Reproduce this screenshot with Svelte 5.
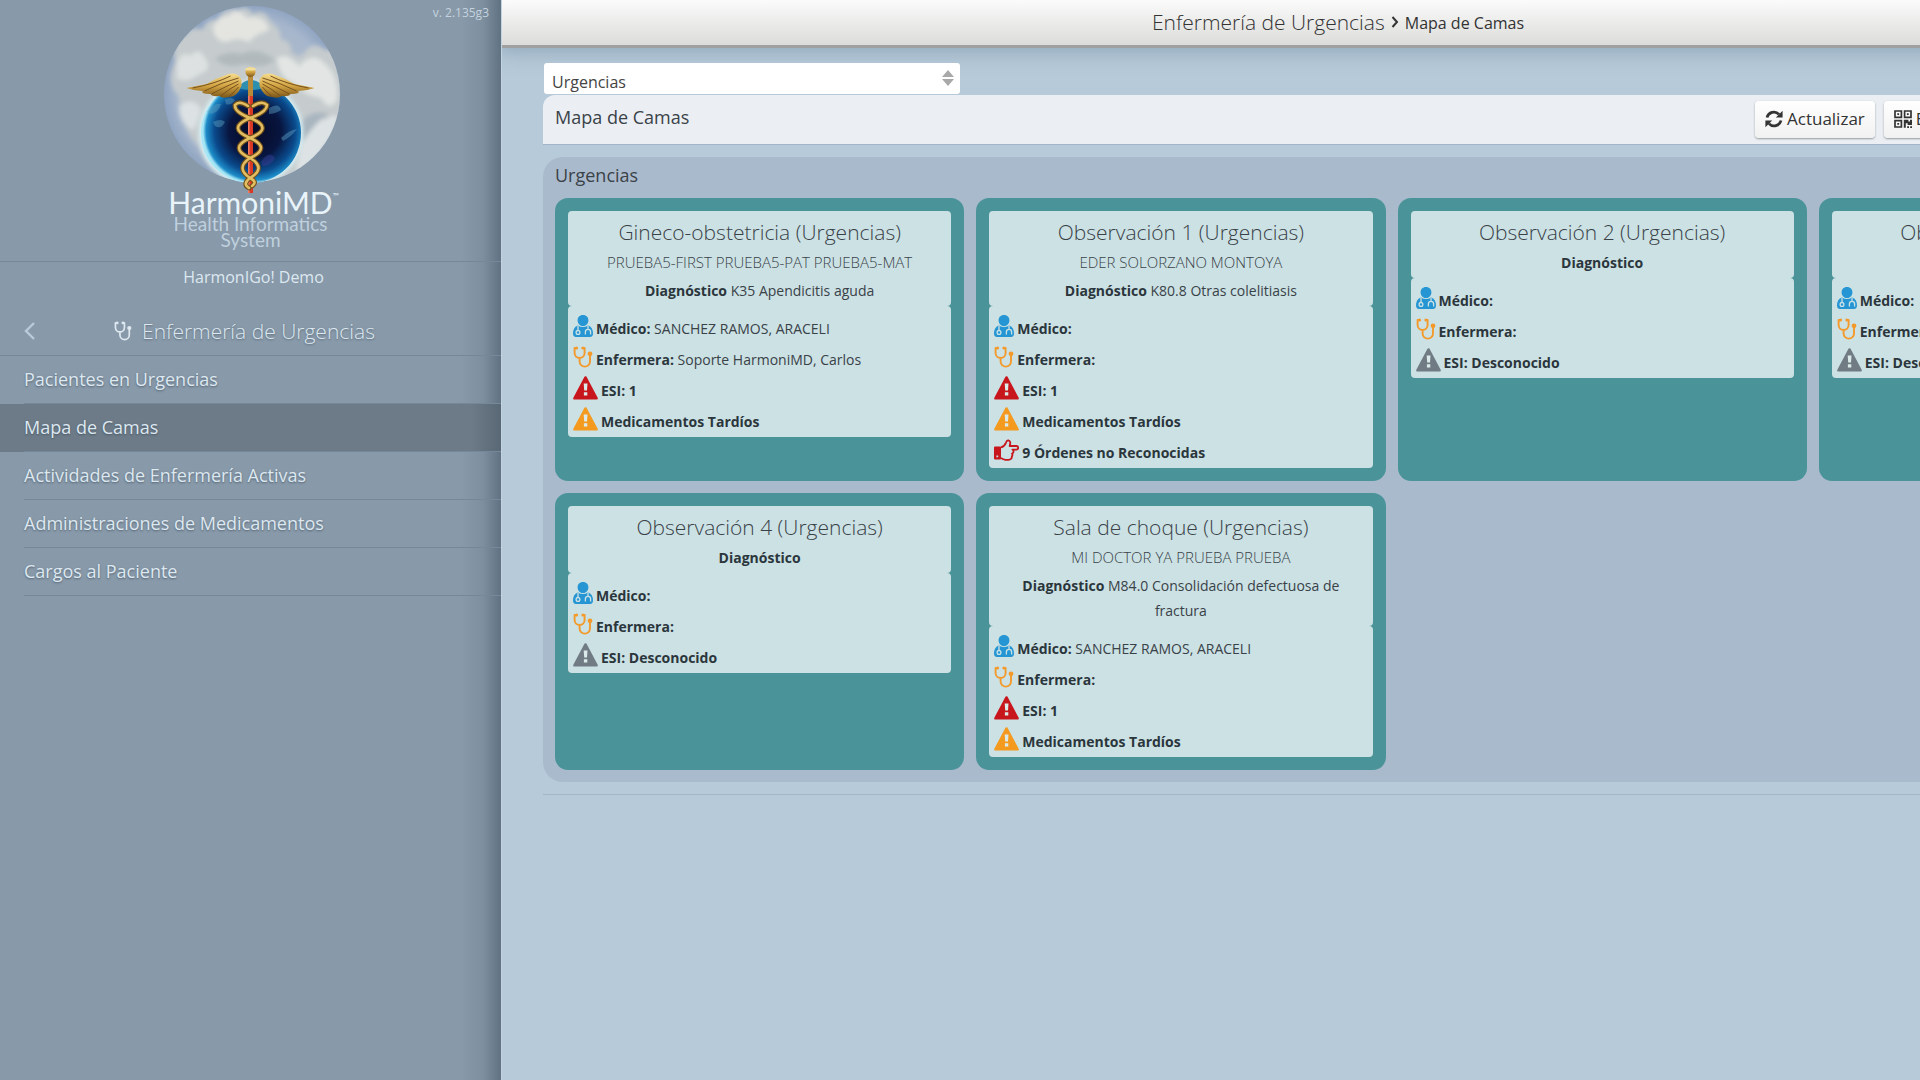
<script lang="ts">
  type Bed = {
    name: string;
    patient?: string;
    diagnosis?: string;
    doctor?: string;
    nurse?: string;
    esi?: number;
    lateMeds?: boolean;
    orders?: number;
  };

  const navItems = [
    'Pacientes en Urgencias',
    'Mapa de Camas',
    'Actividades de Enfermería Activas',
    'Administraciones de Medicamentos',
    'Cargos al Paciente'
  ];

  const beds: Bed[] = [
    {
      name: 'Gineco-obstetricia (Urgencias)',
      patient: 'PRUEBA5-FIRST PRUEBA5-PAT PRUEBA5-MAT',
      diagnosis: 'K35 Apendicitis aguda',
      doctor: 'SANCHEZ RAMOS, ARACELI',
      nurse: 'Soporte HarmoniMD, Carlos',
      esi: 1,
      lateMeds: true
    },
    {
      name: 'Observación 1 (Urgencias)',
      patient: 'EDER SOLORZANO MONTOYA',
      diagnosis: 'K80.8 Otras colelitiasis',
      esi: 1,
      lateMeds: true,
      orders: 9
    },
    { name: 'Observación 2 (Urgencias)' },
    { name: 'Observación 3 (Urgencias)' },
    { name: 'Observación 4 (Urgencias)' },
    {
      name: 'Sala de choque (Urgencias)',
      patient: 'MI DOCTOR YA PRUEBA PRUEBA',
      diagnosis: 'M84.0 Consolidación defectuosa de fractura',
      doctor: 'SANCHEZ RAMOS, ARACELI',
      esi: 1,
      lateMeds: true
    }
  ];

  let active = $state('Mapa de Camas');
  let area = $state('Urgencias');
</script>

{#snippet stethoscope()}
  <svg class="steth" viewBox="0 0 20 22" aria-hidden="true">
    <path
      d="M3 2 H1.6 V7 a5 5 0 0 0 10 0 V2 H10.2 M6.6 12 v3.4 a5.2 5.2 0 0 0 10.4 0 V9.6"
      fill="none"
      stroke="currentColor"
      stroke-width="1.9"
      stroke-linejoin="round"
    />
    <circle cx="3.6" cy="2" r="1.5" fill="currentColor" />
    <circle cx="9.8" cy="2" r="1.5" fill="currentColor" />
    <circle cx="17" cy="7.8" r="2.4" fill="currentColor" />
  </svg>
{/snippet}

{#snippet warning(level: string)}
  <svg class="warn {level}" viewBox="0 0 25 24" aria-hidden="true">
    <path d="M12.5 1.4 L23.6 22.4 H1.4 Z" fill="currentColor" stroke="currentColor" stroke-width="2.4" stroke-linejoin="round" />
    <path d="M10.7 7.6 h3.8 l-.5 7 h-2.8 z M10.9 16.2 h3.4 v3.2 h-3.4 z" fill="#dcebea" />
  </svg>
{/snippet}

<div class="shell">
  <aside class="sidebar">
    <span class="version">v. 2.135g3</span>
    <div class="brand">
      <svg class="logo" viewBox="0 0 220 196" role="img" aria-label="HarmoniMD">
        <defs>
          <radialGradient id="sky" cx="50%" cy="50%" r="50%">
            <stop offset="0" stop-color="#b9c2cb" />
            <stop offset="0.85" stop-color="#a6b6cc" />
            <stop offset="1" stop-color="#90a5c2" />
          </radialGradient>
          <radialGradient id="globe" cx="54%" cy="48%" r="52%">
            <stop offset="0" stop-color="#060a26" />
            <stop offset="0.5" stop-color="#08153f" />
            <stop offset="0.78" stop-color="#0a4a8c" />
            <stop offset="0.94" stop-color="#1d8cc8" />
            <stop offset="1" stop-color="#a5e6f6" />
          </radialGradient>
          <linearGradient id="gold" x1="0" y1="0" x2="0" y2="1">
            <stop offset="0" stop-color="#f6dc8c" />
            <stop offset="0.5" stop-color="#d3a544" />
            <stop offset="1" stop-color="#7c5518" />
          </linearGradient>
          <filter id="soft" x="-20%" y="-20%" width="140%" height="140%">
            <feGaussianBlur stdDeviation="2" />
          </filter>
          <clipPath id="sphere"><circle cx="111" cy="94" r="88" /></clipPath>
        </defs>
        <circle cx="111" cy="94" r="88" fill="url(#sky)" />
        <g clip-path="url(#sphere)">
          <g filter="url(#soft)">
            <path
              d="M34 62 Q30 40 46 34 Q48 26 62 30 Q66 18 76 20 Q84 6 98 10 Q104 4 112 14 Q124 8 130 22 Q140 28 140 40 Q150 40 150 52 Q158 60 164 52 Q172 40 184 50 Q196 48 204 70 V170 Q150 190 90 184 Q66 170 58 146 Q40 130 38 96 Q24 84 34 62Z"
              fill="#c6ccce"
            />
            <path d="M72 28 Q76 16 88 16 Q96 6 106 18 Q124 14 128 30 Q114 34 108 42 Q96 36 86 42 Q74 42 72 28Z" fill="#e4e5e1" />
            <path d="M136 58 Q146 52 158 66 Q172 50 184 64 Q198 76 196 100 Q188 112 180 98 Q164 96 154 84 Q138 78 136 58Z" fill="#e2e5e3" />
            <path d="M36 64 Q40 50 50 56 Q58 46 64 58 Q72 70 58 74 Q46 84 36 78Z" fill="#dde1e1" />
            <path d="M38 106 Q50 96 60 108 Q58 122 52 130 Q38 124 38 106Z" fill="#dce2e3" />
            <path d="M164 130 Q172 114 184 120 Q194 112 198 118 Q186 154 154 174 Q160 148 164 130Z" fill="#dde3e4" />
            <path d="M74 58 Q88 50 100 54 Q116 46 134 60 Q122 70 104 64 Q84 70 74 58Z" fill="#b1b9bd" />
            <path d="M158 126 Q168 108 188 114 Q172 124 162 142Z" fill="#a9b5bf" />
          </g>
          <circle cx="110" cy="133" r="52" fill="#d8f3f8" filter="url(#soft)" />
        </g>
        <circle cx="110" cy="133" r="50" fill="url(#globe)" />
        <g fill="#5d9fc2" opacity="0.45">
          <path d="M66 112 q8 -10 14 -8 q-2 8 -10 10z M72 122 q8 -4 12 0 q-4 8 -10 4z M84 100 q6 -4 10 0 q-4 6 -9 4z" />
          <path d="M128 108 q10 -6 12 2 q-6 4 -12 4z M140 138 q8 -8 16 -9 q-6 8 -14 12z" />
          <path d="M120 162 q8 -12 14 -4 q-4 8 -12 8z" fill="#3d3f9a" />
        </g>
        <path d="M97 88 Q102 80 110 80 Q118 80 123 88 Q110 92 97 88Z" fill="#2e8fae" />

        <rect x="107" y="80" width="5" height="113" fill="#d93a26" />
        <rect x="107" y="80" width="1.6" height="113" fill="#f27d62" />
        {#each [1, -1] as side}
          <g transform="translate(109.5 0) scale({side} 1)">
            <path
              d="M9 80 Q12 72 22 74 Q34 78 44 84 Q54 86 64 88 Q56 91 48 91 Q50 94 40 94 Q38 97 31 96 Q28 99 22 97 Q14 98 9 86Z"
              fill="url(#gold)"
            />
            <path
              d="M12 78 Q28 82 46 91 M12 81 Q24 86 39 94 M12 84 Q20 88 30 96 M12 87 Q16 92 22 97 M20 76 Q36 84 58 88"
              fill="none"
              stroke="#76521d"
              stroke-width="1"
            />
          </g>
        {/each}
        <g fill="none" stroke-linecap="round">
          {#each ['#70501a', '#e3bd62'] as tone, i}
            <g stroke={tone} stroke-width={i ? 2.6 : 4.8}>
              <path d="M107 106 Q98 100 94 105 Q93 112 109 118 Q134 128 109 138 Q87 148 109 158 Q126 168 109 178 Q101 184 108 188" />
              <path d="M112 106 Q121 100 126 105 Q126 112 109 118 Q85 128 109 138 Q131 148 109 158 Q94 168 109 178 Q117 182 111 186" />
            </g>
          {/each}
        </g>
        <rect x="107" y="76" width="5" height="20" fill="#b98a3a" />
        <circle cx="109.5" cy="72" r="5" fill="url(#gold)" />
        <ellipse cx="109.5" cy="69" rx="5.5" ry="1.6" fill="#f4dd98" />
      </svg>
      <strong class="brand-name">HarmoniMD<sup>™</sup></strong>
      <span class="brand-sub">Health Informatics<br />System</span>
    </div>
    <div class="site">HarmonIGo! Demo</div>
    <div class="section">
      <button class="back" aria-label="Atrás">
        <svg viewBox="0 0 12 18"><path d="M10 1 L2 9 L10 17" fill="none" stroke="currentColor" stroke-width="2.4" /></svg>
      </button>
      <h2>{@render stethoscope()}Enfermería de Urgencias</h2>
    </div>
    <nav>
      {#each navItems as item}
        <a href="#top" class:active={item === active} onclick={() => (active = item)}><span>{item}</span></a>
      {/each}
    </nav>
  </aside>

  <main class="main">
    <header class="topbar">
      <h1>Enfermería de Urgencias</h1>
      <svg viewBox="0 0 8 12" aria-hidden="true"><path d="M1.5 1 L6 6 L1.5 11" fill="none" stroke="currentColor" stroke-width="2" /></svg>
      <span>Mapa de Camas</span>
    </header>

    <div class="content">
      <div class="area">
        <select bind:value={area} aria-label="Área">
          <option>Urgencias</option>
        </select>
        <svg viewBox="0 0 12 16" aria-hidden="true"><path d="M6 0 L12 7 H0Z M0 9 H12 L6 16Z" fill="#a9a9a9" /></svg>
      </div>

      <div class="toolbar">
        <h2>Mapa de Camas</h2>
        <div class="actions">
          <button>
            <svg viewBox="0 0 18 18" aria-hidden="true">
              <path d="M2 7.5 A7 7 0 0 1 14 4.4 M16 10.5 A7 7 0 0 1 4 13.6" fill="none" stroke="currentColor" stroke-width="2.8" />
              <path d="M17.6 0.8 V7.6 H10.8Z M0.4 17.2 V10.4 H7.2Z" fill="currentColor" />
            </svg>
            Actualizar
          </button>
          <button>
            <svg viewBox="0 0 18 18" aria-hidden="true">
              <path d="M1 1 h6.4 v6.4 h-6.4z M10.6 1 h6.4 v6.4 h-6.4z M1 10.6 h6.4 v6.4 h-6.4z" fill="none" stroke="currentColor" stroke-width="1.7" />
              <path
                d="M3.3 3.3h1.8v1.8h-1.8z M12.9 3.3h1.8v1.8h-1.8z M3.3 12.9h1.8v1.8h-1.8z M9.8 9.8h4.6v1.8h1.6v-1.8h2v5.2h-4.4v-1.8h-1.8v4.6h-2z M13.2 16.2h1.8v1.8h-1.8z M16.2 16.2h1.8v1.8h-1.8z"
                fill="currentColor"
              />
            </svg>
            E
          </button>
        </div>
      </div>

      <section class="panel">
        <h3>Urgencias</h3>
        <div class="beds">
          {#each beds as bed}
            <article class="bed">
              <div class="bed-head">
                <h4>{bed.name}</h4>
                {#if bed.patient}
                  <p class="patient">{bed.patient}</p>
                {/if}
                <p><b>Diagnóstico</b> {bed.diagnosis ?? ''}</p>
              </div>
              <ul class="bed-body">
                <li>
                  <svg class="doctor" viewBox="0 0 20 22" aria-hidden="true">
                    <path d="M10 0 C13.4 0 15.4 2.4 15.4 5.4 S13 11 10 11 S4.6 8.4 4.6 5.4 S6.6 0 10 0Z M5 10.4 Q10 13.6 15 10.4 Q20 12 20 18.6 Q20 22 17 22 H3 Q0 22 0 18.6 Q0 12 5 10.4Z" fill="currentColor" />
                    <path d="M5 11 V15.6 M15 11 V14 M12.4 19.4 V17 Q12.4 14.4 15 14.4 T17.6 17 V19.4" fill="none" stroke="#cbe1e4" stroke-width="1.3" />
                    <circle cx="5" cy="17.4" r="1.9" fill="none" stroke="#cbe1e4" stroke-width="1.3" />
                  </svg>
                  <span><b>Médico:</b> {bed.doctor ?? ''}</span>
                </li>
                <li class="nurse">{@render stethoscope()}<span><b>Enfermera:</b> {bed.nurse ?? ''}</span></li>
                <li>{@render warning(bed.esi ? 'high' : 'unknown')}<b>ESI: {bed.esi ?? 'Desconocido'}</b></li>
                {#if bed.lateMeds}
                  <li>{@render warning('late')}<b>Medicamentos Tardíos</b></li>
                {/if}
                {#if bed.orders}
                  <li>
                    <svg class="hand" viewBox="0 0 25 22" aria-hidden="true">
                      <path
                        d="M7 8.4 Q10.4 7.6 12 3.6 Q12.8 1 14.4 1.4 Q17.4 2.2 15.6 7 H22.4 Q24.2 7.2 24.2 8.8 T22.4 10.6 H18.4 Q20 11.6 19.4 13.2 Q19 14.4 18 14.6 Q19 16 17.8 17.6 Q18 20.6 14.4 20.8 H11.4 Q9.4 20.6 7 19"
                        fill="none"
                        stroke="currentColor"
                        stroke-width="1.8"
                        stroke-linejoin="round"
                      />
                      <path d="M1 7.6 H6.2 Q7 7.6 7 8.6 V19.4 Q7 20.4 6.2 20.4 H1 Q0 20.4 0 19.4 V8.6 Q0 7.6 1 7.6Z M2.4 16.4 v1.8 h1.8 v-1.8z" fill="currentColor" fill-rule="evenodd" />
                    </svg>
                    <b>{bed.orders} Órdenes no Reconocidas</b>
                  </li>
                {/if}
              </ul>
            </article>
          {/each}
        </div>
      </section>
      <hr />
    </div>
  </main>
</div>

<style>
  :global(body) {
    margin: 0;
    font-family: 'Open Sans', 'Noto Sans', sans-serif;
    color: #3a4248;
    background: #b6cad9;
  }

  h1,
  h2,
  h3,
  h4,
  p,
  ul {
    margin: 0;
    padding: 0;
    font-weight: 400;
  }

  svg {
    flex-shrink: 0;
  }

  .shell {
    display: flex;
    min-height: 100vh;
    overflow: hidden;
  }

  .sidebar {
    position: relative;
    flex: 0 0 501px;
    color: #dde8f0;
    background: linear-gradient(to right, transparent calc(100% - 40px), rgba(84, 102, 118, 0.2) calc(100% - 18px), rgba(70, 88, 104, 0.6)), #8899a9;
  }

  .version {
    position: absolute;
    top: 4px;
    right: 12px;
    font-size: 12px;
    line-height: 18px;
    color: #c4d3df;
  }

  .brand {
    display: flex;
    flex-direction: column;
    align-items: center;
    height: 261px;
    border-bottom: 1px solid #75889a;
    font-family: Lato, sans-serif;
  }

  .logo {
    width: 220px;
    height: 196px;
  }

  .brand-name {
    display: flex;
    margin-top: -8px;
    font-size: 30px;
    font-weight: 400;
    line-height: 28px;
    color: #e8f4fa;
  }

  .brand-name sup {
    font-size: 8px;
    line-height: 16px;
    width: 0;
  }

  .brand-sub {
    font-size: 19px;
    line-height: 16px;
    text-align: center;
    color: #bfd0de;
  }

  .site {
    padding: 4px 0 0 6px;
    font-size: 16px;
    line-height: 22px;
    text-align: center;
  }

  .section {
    display: flex;
    align-items: center;
    height: 48px;
    margin-top: 19px;
    border-bottom: 1px solid #75889a;
  }

  .back {
    display: flex;
    width: 60px;
    padding: 0 0 0 24px;
    border: 0;
    background: none;
    color: #b9cbd9;
  }

  .back svg {
    width: 12px;
    height: 18px;
  }

  .section h2 {
    display: flex;
    flex: 1;
    align-items: center;
    justify-content: center;
    gap: 10px;
    padding-right: 72px;
    font-size: 21px;
    font-weight: 300;
    line-height: 32px;
    text-shadow: 0 1px 2px rgba(50, 65, 80, 0.5);
  }

  .section .steth {
    width: 18px;
    height: 20px;
  }

  nav {
    display: flex;
    flex-direction: column;
  }

  nav a {
    padding-left: 24px;
    font-size: 18px;
    color: #dde8f0;
    text-decoration: none;
    text-shadow: 0 1px 2px rgba(50, 65, 80, 0.6);
  }

  nav a span {
    display: block;
    line-height: 47px;
    border-bottom: 1px solid #75889a;
  }

  nav a.active {
    background: linear-gradient(to right, transparent calc(100% - 30px), rgba(60, 76, 90, 0.4)), #6d7b88;
  }

  .main {
    flex: 1;
    min-width: 0;
    overflow: hidden;
    background: #b6cad9;
    border-left: 1px solid #c3d3df;
  }

  .topbar {
    display: flex;
    align-items: center;
    justify-content: center;
    gap: 6px;
    box-sizing: border-box;
    width: calc(100vw - 248px);
    height: 48px;
    padding-bottom: 2px;
    border-bottom: 3px solid #9fa09f;
    background: linear-gradient(#fbfbfb, #dcdcda);
    box-shadow: 0 0 20px 4px rgba(110, 135, 155, 0.5);
    color: #333;
  }

  .topbar h1 {
    font-size: 21px;
    font-weight: 300;
  }

  .topbar svg {
    width: 8px;
    height: 12px;
  }

  .topbar span {
    font-size: 16px;
    padding-top: 2px;
  }

  .content {
    width: calc(100vw - 223px);
    padding: 15px 0 0 41px;
  }

  .area {
    position: relative;
    width: 416px;
    padding-left: 1px;
  }

  .area select {
    appearance: none;
    display: block;
    width: 100%;
    height: 31px;
    padding: 6px 8px 0;
    border: 0;
    border-radius: 3px;
    background: #fff;
    color: #444;
    font: 16px 'Open Sans', sans-serif;
  }

  .area svg {
    position: absolute;
    top: 7px;
    right: 6px;
    width: 12px;
    height: 16px;
  }

  .toolbar {
    display: flex;
    justify-content: space-between;
    height: 49px;
    margin-top: 1px;
    border-radius: 12px 12px 0 0;
    background: #ebeff3;
    border-bottom: 1px solid #a3b3c8;
  }

  .toolbar h2 {
    padding-left: 12px;
    font-size: 18px;
    line-height: 45px;
  }

  .actions {
    display: flex;
    align-items: flex-start;
    gap: 9px;
    width: 485px;
    padding: 6px 0 0;
  }

  .actions button {
    display: flex;
    align-items: center;
    gap: 4px;
    height: 37px;
    padding: 0 10px 2px;
    border: 0;
    border-radius: 4px;
    background: linear-gradient(#fff, #f1f1f1);
    box-shadow: 0 1px 2px rgba(60, 70, 80, 0.5);
    color: #333;
    font: 17px 'Open Sans', sans-serif;
  }

  .actions svg {
    width: 18px;
    height: 18px;
  }

  .panel {
    margin-top: 12px;
    padding: 0 12px 12px;
    border-radius: 20px;
    background: #aabacd;
  }

  .panel h3 {
    padding-top: 2px;
    font-size: 18px;
    line-height: 32px;
    height: 39px;
  }

  .beds {
    display: grid;
    grid-template-columns: repeat(4, 1fr);
    gap: 12px;
  }

  .bed {
    padding: 13px;
    border-radius: 13px;
    background: #4a9499;
    font-size: 14px;
  }

  .bed-head,
  .bed-body {
    border-radius: 4px;
    background: #cbe1e4;
  }

  .bed-head {
    padding: 5px 24px 3px;
    text-align: center;
  }

  .bed h4 {
    margin-bottom: 2px;
    font-size: 21px;
    font-weight: 300;
    line-height: 32px;
  }

  .bed p {
    line-height: 25px;
  }

  .bed .patient {
    margin-bottom: 3px;
    font-size: 15px;
    font-weight: 300;
  }

  .bed b {
    color: #2b363c;
    font-weight: 700;
  }

  .bed-body {
    padding: 6px 5px 1px;
    list-style: none;
  }

  .bed-body li {
    display: flex;
    align-items: center;
    gap: 3px;
    height: 31px;
  }

  .bed-body li > span,
  .bed-body li > b {
    padding-top: 2px;
  }

  .bed-body svg {
    width: 20px;
    height: 22px;
    margin-bottom: 4px;
  }

  .bed-body .warn,
  .bed-body .hand {
    width: 25px;
    height: 24px;
  }

  .doctor {
    color: #2596d3;
  }

  .nurse .steth {
    color: #f39a2b;
  }

  .high,
  .hand {
    color: #c8161d;
  }

  .late {
    color: #f39a1f;
  }

  .unknown {
    color: #717b84;
  }

  hr {
    margin: 12px 0 0;
    border: 0;
    border-top: 1px solid #a3b6c8;
  }
</style>
